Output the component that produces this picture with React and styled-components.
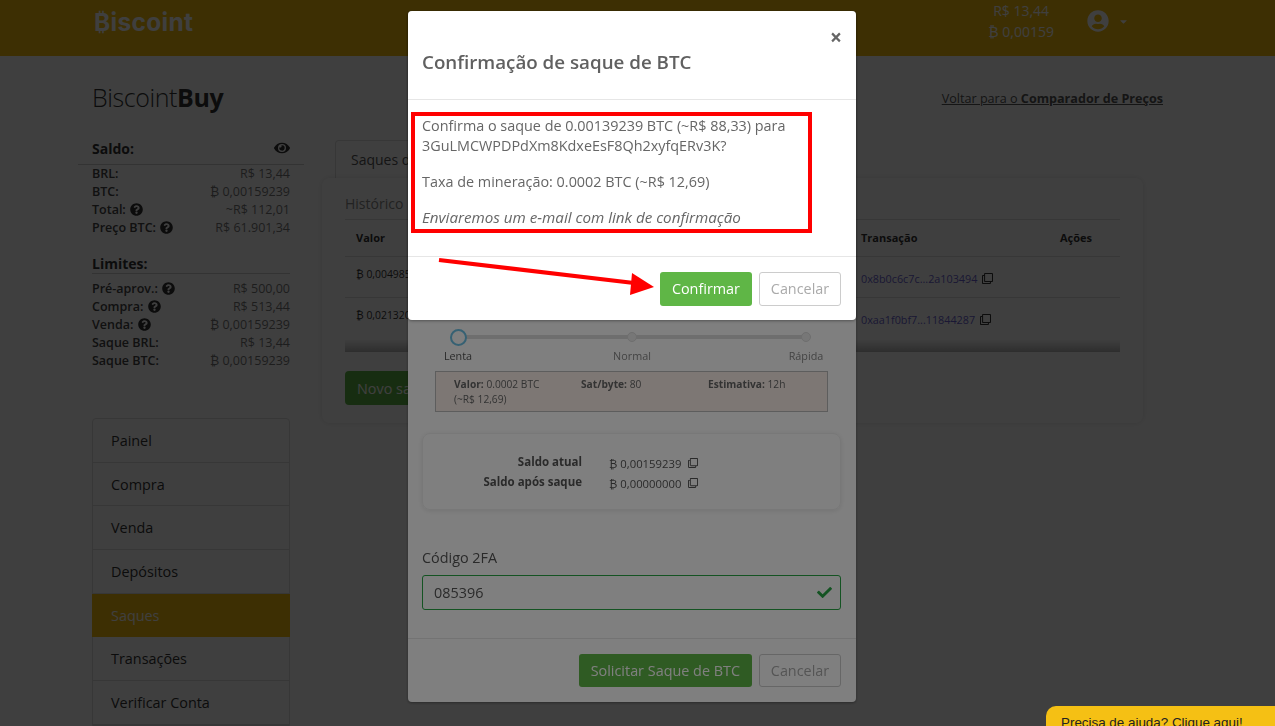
import React from 'react';
import styled, { createGlobalStyle } from 'styled-components';
import { FaEye, FaQuestionCircle, FaUserCircle, FaRegClone, FaCheck, FaCaretDown } from 'react-icons/fa';

const GlobalStyle = createGlobalStyle`
  html, body {
    margin: 0;
    height: 726px;
    overflow: hidden;
    background: #fff;
    font-family: "Open Sans", "DejaVu Sans", sans-serif;
    color: #555;
  }
  * { box-sizing: border-box; }
`;

const Header = styled.header`
  height: 56px;
  background: #f5bd0d;
  padding: 0 92px 0 94px;
  display: flex;
  align-items: flex-start;
`;

const Logo = styled.div`
  font-family: Inter, sans-serif;
  font-weight: 700;
  font-size: 24.5px;
  line-height: 22px;
  margin-top: 11px;
  color: #fff;
  letter-spacing: 0.3px;
`;

const HeaderBalance = styled.div`
  margin-left: auto;
  margin-right: 33px;
  color: #fff;
  font-size: 14px;
  line-height: 21px;
`;

const BalanceLine = styled.div`
  text-align: center;
`;

const UserMenu = styled.div`
  display: flex;
  align-items: center;
  gap: 9px;
  margin-top: 10px;
  margin-right: 54px;
  color: #fff;
  font-size: 22px;
  svg + svg { font-size: 11px; }
`;

const Container = styled.div`
  padding: 0 112px 0 92px;
`;

const TitleRow = styled.div`
  display: flex;
  align-items: center;
  justify-content: space-between;
  height: 88px;
  padding-bottom: 3px;
`;

const PageTitle = styled.h1`
  margin: 0 0 3px;
  font-size: 25px;
  font-weight: 300;
  color: #333;
  letter-spacing: -0.4px;
  b { font-weight: 700; }
`;

const BackLink = styled.a`
  font-size: 12.6px;
  color: #555;
  text-decoration: underline;
  b { font-weight: 700; }
`;

const Columns = styled.div`
  display: flex;
  align-items: flex-start;
  gap: 32px;
`;

const Sidebar = styled.aside`
  width: 198px;
  flex: none;
`;

const SectionHead = styled.div`
  display: flex;
  justify-content: space-between;
  align-items: center;
  font-size: 14px;
  font-weight: 700;
  color: #333;
  box-sizing: content-box;
  height: ${p => p.$first ? '20px' : '19px'};
  margin: ${p => p.$first ? '-6px -14px 0' : '17px 0 0'};
  padding: ${p => p.$first ? '0 14px 6px' : '0'};
  border-bottom: 1px solid #ccc;
  svg { font-size: 16px; color: #333; }
`;

const StatList = styled.div`
  margin-top: ${p => p.$gap}px;
`;

const StatRow = styled.div`
  display: flex;
  justify-content: space-between;
  height: 18px;
  line-height: 18px;
  font-size: 12.5px;
`;

const StatLabel = styled.span`
  font-weight: 600;
  color: #444;
  svg { font-size: 13px; color: #333; vertical-align: -2px; margin-left: 1px; }
`;

const StatValue = styled.span`
  color: #777;
`;

const Nav = styled.nav`
  margin-top: 48px;
  border: 1px solid #ddd;
  border-radius: 4px 4px 0 0;
`;

const NavItem = styled.div`
  height: 43.7px;
  line-height: 43px;
  padding-left: ${p => p.$active ? '19px' : '18px'};
  font-size: 14.4px;
  margin: ${p => p.$active ? '0 -1px' : '0'};
  background: ${p => p.$active ? '#f5bd0d' : 'transparent'};
  color: ${p => p.$active ? '#fff' : '#333'};
  border-bottom: 1px solid ${p => p.$active ? '#f5bd0d' : '#ddd'};
`;

const Main = styled.main`
  width: 821px;
  flex: none;
  margin-top: -4px;
`;

const Tab = styled.div`
  margin-left: 13px;
  width: 140px;
  height: 39px;
  padding: 9px 15px;
  font-size: 14px;
  color: #555;
  white-space: nowrap;
  background: #fff;
  border: 1px solid #ddd;
  border-bottom: 0;
  border-radius: 4px 4px 0 0;
`;

const Card = styled.section`
  height: 245px;
  margin-top: -1px;
  padding: 16px 23px;
  background: #fff;
  border-radius: 8px;
  box-shadow: 0 0 6px rgba(0, 0, 0, 0.12);
`;

const CardTitle = styled.div`
  font-size: 14px;
  line-height: 19px;
  height: 25px;
  color: #888;
`;

const Table = styled.table`
  width: 775px;
  table-layout: fixed;
  border-collapse: collapse;
  font-size: 11px;
  border-top: 1px solid #ddd;
`;

const Th = styled.th`
  height: 37px;
  padding: 0 11px 2px;
  text-align: left;
  color: #333;
  font-weight: 700;
  border-bottom: 1px solid #ddd;
`;

const Td = styled.td`
  height: 41px;
  padding: ${p => p.$raised ? '0 11px 6px' : '3px 11px 0'};
  font-size: ${p => p.$raised ? '10.4px' : '11px'};
  color: #333;
  white-space: nowrap;
  border-bottom: 1px solid ${p => p.$last ? 'transparent' : '#ddd'};
`;

const TxLink = styled.a`
  color: #6a5fd0;
  font-size: 10.8px;
  svg { color: #333; font-size: 11px; margin-left: 5px; vertical-align: -1px; }
`;

const TableFade = styled.div`
  height: 13px;
  background: linear-gradient(to bottom, rgba(0, 0, 0, 0), rgba(0, 0, 0, 0.28));
`;

const NewButton = styled.button`
  display: block;
  margin-top: 19px;
  height: 34px;
  border: 0;
  border-radius: 4px;
  background: #5fb646;
  color: #fff;
  font: 14.4px "Open Sans", sans-serif;
  padding: 0 12px;
`;

const Backdrop = styled.div`
  position: fixed;
  inset: 0;
  z-index: ${p => p.$level};
  background: rgba(0, 0, 0, 0.5);
  display: flex;
  justify-content: center;
  align-items: flex-start;
  padding: 11px 11px 0 0;
`;

const Modal = styled.div`
  width: 448px;
  height: ${p => p.$height}px;
  background: #fff;
  border-radius: 4px;
  display: flex;
  flex-direction: column;
  position: relative;
  box-shadow: 0 1px 3px rgba(0, 0, 0, 0.35);
`;

const ModalHeader = styled.div`
  height: 89px;
  flex: none;
  padding: 38px 14px 0;
  border-bottom: 1px solid #e6e6e6;
  position: relative;
`;

const ModalTitle = styled.h2`
  margin: 0;
  font-size: 18.75px;
  line-height: 26px;
  font-weight: 600;
  color: #606060;
`;

const CloseMark = styled.span`
  position: absolute;
  right: 14px;
  top: 14px;
  font-size: 21px;
  line-height: 24px;
  font-weight: 700;
  color: #666;
`;

const ConfirmBody = styled.div`
  flex: 1;
  padding: 16px 14px 0;
  font-size: 14.4px;
  line-height: 20px;
  color: #666;
  p { margin: 0 0 16px; }
  em { font-size: 15.2px; line-height: 1; }
`;

const ModalFooter = styled.div`
  height: ${p => p.$height}px;
  flex: none;
  border-top: 1px solid #e6e6e6;
  display: flex;
  justify-content: flex-end;
  align-items: flex-start;
  gap: 7px;
  padding: 15px 15px 0 0;
`;

const PrimaryButton = styled.button`
  height: ${p => p.$height}px;
  padding: 0 12px 1px;
  border: 0;
  border-radius: 3px;
  background: #5fb646;
  color: #fff;
  font: 500 14.4px "Open Sans", sans-serif;
  white-space: nowrap;
`;

const GhostButton = styled.button`
  width: 82px;
  height: ${p => p.$height}px;
  padding: 0 0 1px;
  border: 1px solid #ccc;
  border-radius: 3px;
  background: #fff;
  color: #aaa;
  font: 14.4px "Open Sans", sans-serif;
`;

const Highlight = styled.div`
  position: absolute;
  left: 3px;
  top: 101px;
  width: 401px;
  height: 121px;
  border: 4px solid #f00;
`;

const Arrow = styled.svg`
  position: absolute;
  left: 30px;
  top: 245px;
`;

const WithdrawBody = styled.div`
  flex: 1;
  padding: 230px 15px 0 14px;
`;

const Slider = styled.div`
  margin: 0 5px 0 6px;
  height: 41px;
  display: flex;
  justify-content: space-between;
  position: relative;
`;

const SliderTrack = styled.div`
  position: absolute;
  left: 30px;
  right: 30px;
  top: 5px;
  height: 4px;
  background: #ddd;
`;

const SliderStop = styled.div`
  width: 60px;
  display: flex;
  flex-direction: column;
  align-items: center;
  gap: 4px;
  position: relative;
  font-size: 10.8px;
  line-height: 15px;
  color: ${p => p.$active ? '#555' : '#888'};
`;

const SliderDot = styled.div`
  height: 14px;
  display: flex;
  align-items: center;
  &::before {
    content: "";
    width: ${p => p.$active ? '13px' : '8px'};
    height: ${p => p.$active ? '13px' : '8px'};
    border-radius: 50%;
    background: ${p => p.$active ? '#fff' : '#eee'};
    border: ${p => p.$active ? '2px solid #6cc2e6' : '1px solid #ddd'};
  }
`;

const FeeBox = styled.div`
  margin: 0 13px;
  height: 41px;
  padding: 5px 18px;
  display: grid;
  grid-template-columns: repeat(3, 127px);
  border: 1px solid #bbb;
  background: #fbefe9;
  font-size: 10.2px;
  line-height: 15px;
  color: #666;
  b { font-weight: 700; }
`;

const FeeCell = styled.div`
  padding-right: ${p => p.$wrap ? '26px' : '0'};
`;

const BalanceCard = styled.div`
  margin-top: 21px;
  height: 77px;
  padding: 18px 0 0;
  border-radius: 8px;
  box-shadow: 0 1px 5px rgba(0, 0, 0, 0.1);
  border: 1px solid #f0f0f0;
  display: grid;
  grid-template-columns: 159px auto;
  grid-auto-rows: 20px;
  column-gap: 27px;
  font-size: 11.5px;
  line-height: 20px;
  color: #555;
`;

const BalanceLabel = styled.div`
  text-align: right;
  font-weight: 700;
`;

const BalanceValue = styled.div`
  padding-top: 2px;
  font-size: 11.3px;
  svg { font-size: 10px; margin-left: 7px; }
`;

const FieldLabel = styled.div`
  margin-top: 38px;
  font-size: 14.4px;
  line-height: 20px;
  color: #555;
`;

const CodeField = styled.div`
  margin-top: 7px;
  height: 35px;
  border: 1px solid #28a745;
  border-radius: 3px;
  padding: 0 11px;
  display: flex;
  align-items: center;
  justify-content: space-between;
  font-size: 14.4px;
  color: #555;
  svg { color: #28a745; font-size: 15px; margin-right: -3px; }
`;

const HelpTab = styled.div`
  position: fixed;
  z-index: 30;
  left: 1046px;
  right: 0;
  top: 706px;
  height: 40px;
  padding: 8px 15px;
  background: #f5c014;
  border-radius: 10px 0 0 0;
  font: 13.4px "Liberation Sans", Arial, sans-serif;
  line-height: 17px;
  color: #222;
`;

const stats = [
  ['BRL:', 'R$ 13,44'],
  ['BTC:', '₿ 0,00159239'],
  ['Total:', '~R$ 112,01', true],
  ['Preço BTC:', 'R$ 61.901,34', true],
];

const limits = [
  ['Pré-aprov.:', 'R$ 500,00', true],
  ['Compra:', 'R$ 513,44', true],
  ['Venda:', '₿ 0,00159239', true],
  ['Saque BRL:', 'R$ 13,44'],
  ['Saque BTC:', '₿ 0,00159239'],
];

const navItems = ['Painel', 'Compra', 'Venda', 'Depósitos', 'Saques', 'Transações', 'Verificar Conta'];

const StatRows = ({ rows }) =>
  rows.map(([label, value, help]) => (
    <StatRow key={label}>
      <StatLabel>{label} {help && <FaQuestionCircle />}</StatLabel>
      <StatValue>{value}</StatValue>
    </StatRow>
  ));

export default function App() {
  return (
    <>
      <GlobalStyle />
      <Header>
        <Logo>₿iscoint</Logo>
        <HeaderBalance>
          <BalanceLine>R$ 13,44</BalanceLine>
          <BalanceLine>₿ 0,00159</BalanceLine>
        </HeaderBalance>
        <UserMenu>
          <FaUserCircle />
          <FaCaretDown />
        </UserMenu>
      </Header>
      <Container>
        <TitleRow>
          <PageTitle>Biscoint<b>Buy</b></PageTitle>
          <BackLink>Voltar para o <b>Comparador de Preços</b></BackLink>
        </TitleRow>
        <Columns>
          <Sidebar>
            <SectionHead $first>Saldo: <FaEye /></SectionHead>
            <StatList $gap={0}><StatRows rows={stats} /></StatList>
            <SectionHead>Limites:</SectionHead>
            <StatList $gap={6}><StatRows rows={limits} /></StatList>
            <Nav>
              {navItems.map(item => (
                <NavItem key={item} $active={item === 'Saques'}>{item}</NavItem>
              ))}
            </Nav>
          </Sidebar>
          <Main>
            <Tab>Saques de BTC</Tab>
            <Card>
              <CardTitle>Histórico</CardTitle>
              <Table>
                <colgroup>
                  <col width="505" />
                  <col width="199" />
                  <col width="71" />
                </colgroup>
                <thead>
                  <tr><Th>Valor</Th><Th>Transação</Th><Th>Ações</Th></tr>
                </thead>
                <tbody>
                  <tr>
                    <Td $raised>₿ 0,00498500</Td>
                    <Td><TxLink>0x8b0c6c7c...2a103494<FaRegClone /></TxLink></Td>
                    <Td />
                  </tr>
                  <tr>
                    <Td $raised $last>₿ 0,02132000</Td>
                    <Td $last><TxLink>0xaa1f0bf7...11844287<FaRegClone /></TxLink></Td>
                    <Td $last />
                  </tr>
                </tbody>
              </Table>
              <TableFade />
              <NewButton>Novo saque</NewButton>
            </Card>
          </Main>
        </Columns>
      </Container>

      <Backdrop $level={10}>
        <Modal $height={691}>
          <ModalHeader />
          <WithdrawBody>
            <Slider>
              <SliderTrack />
              <SliderStop $active><SliderDot $active />Lenta</SliderStop>
              <SliderStop><SliderDot />Normal</SliderStop>
              <SliderStop><SliderDot />Rápida</SliderStop>
            </Slider>
            <FeeBox>
              <FeeCell $wrap><b>Valor:</b> 0.0002 BTC (~R$ 12,69)</FeeCell>
              <FeeCell><b>Sat/byte:</b> 80</FeeCell>
              <FeeCell><b>Estimativa:</b> 12h</FeeCell>
            </FeeBox>
            <BalanceCard>
              <BalanceLabel>Saldo atual</BalanceLabel>
              <BalanceValue>₿ 0,00159239<FaRegClone /></BalanceValue>
              <BalanceLabel>Saldo após saque</BalanceLabel>
              <BalanceValue>₿ 0,00000000<FaRegClone /></BalanceValue>
            </BalanceCard>
            <FieldLabel>Código 2FA</FieldLabel>
            <CodeField>085396<FaCheck /></CodeField>
          </WithdrawBody>
          <ModalFooter $height={64}>
            <PrimaryButton $height={33}>Solicitar Saque de BTC</PrimaryButton>
            <GhostButton $height={33}>Cancelar</GhostButton>
          </ModalFooter>
        </Modal>
      </Backdrop>

      <Backdrop $level={20}>
        <Modal $height={309}>
          <ModalHeader>
            <ModalTitle>Confirmação de saque de BTC</ModalTitle>
            <CloseMark>×</CloseMark>
          </ModalHeader>
          <ConfirmBody>
            <p>Confirma o saque de 0.00139239 BTC (~R$ 88,33) para 3GuLMCWPDPdXm8KdxeEsF8Qh2xyfqERv3K?</p>
            <p>Taxa de mineração: 0.0002 BTC (~R$ 12,69)</p>
            <p><em>Enviaremos um e-mail com link de confirmação</em></p>
          </ConfirmBody>
          <ModalFooter $height={64}>
            <PrimaryButton $height={34}>Confirmar</PrimaryButton>
            <GhostButton $height={34}>Cancelar</GhostButton>
          </ModalFooter>
          <Highlight />
          <Arrow width="225" height="42" viewBox="0 0 225 42">
            <path d="M1 4 L196 27" stroke="#f00" strokeWidth="4" fill="none" />
            <path d="M194 17 L216 31 L192 39 Z" fill="#f00" />
          </Arrow>
        </Modal>
      </Backdrop>

      <HelpTab>Precisa de ajuda? Clique aqui!</HelpTab>
    </>
  );
}
